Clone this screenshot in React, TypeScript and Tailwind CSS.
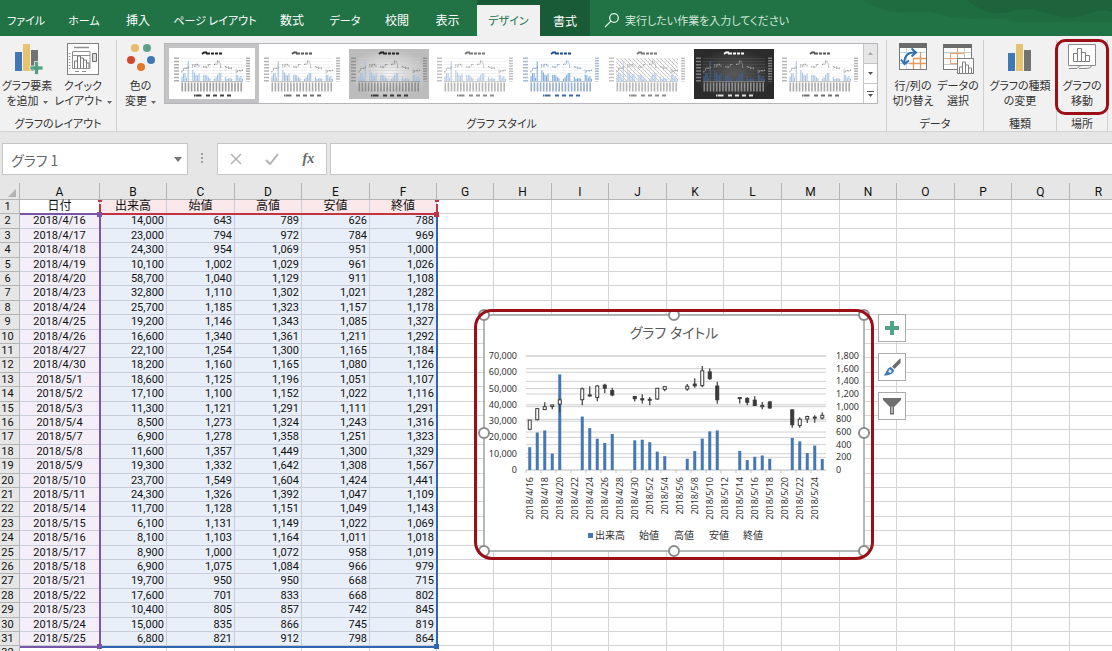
import React, { useState } from 'react'
import clsx from 'clsx'

type Price = [date: string, volume: number, open: number, high: number, low: number, close: number]

const prices: Price[] = [
    ["2018/4/16", 14000, 643, 789, 626, 788],
    ["2018/4/17", 23000, 794, 972, 784, 969],
    ["2018/4/18", 24300, 954, 1069, 951, 1000],
    ["2018/4/19", 10100, 1002, 1029, 961, 1026],
    ["2018/4/20", 58700, 1040, 1129, 911, 1108],
    ["2018/4/23", 32800, 1110, 1302, 1021, 1282],
    ["2018/4/24", 25700, 1185, 1323, 1157, 1178],
    ["2018/4/25", 19200, 1146, 1343, 1085, 1327],
    ["2018/4/26", 16600, 1340, 1361, 1211, 1292],
    ["2018/4/27", 22100, 1254, 1300, 1165, 1184],
    ["2018/4/30", 18200, 1160, 1165, 1080, 1126],
    ["2018/5/1", 18600, 1125, 1196, 1051, 1107],
    ["2018/5/2", 17100, 1100, 1152, 1022, 1116],
    ["2018/5/3", 11300, 1121, 1291, 1111, 1291],
    ["2018/5/4", 8500, 1273, 1324, 1243, 1316],
    ["2018/5/7", 6900, 1278, 1358, 1251, 1323],
    ["2018/5/8", 11600, 1357, 1449, 1300, 1329],
    ["2018/5/9", 19300, 1332, 1642, 1308, 1567],
    ["2018/5/10", 23700, 1549, 1604, 1424, 1441],
    ["2018/5/11", 24300, 1326, 1392, 1047, 1109],
    ["2018/5/14", 11700, 1128, 1151, 1049, 1143],
    ["2018/5/15", 6100, 1131, 1149, 1022, 1069],
    ["2018/5/16", 8100, 1103, 1164, 1011, 1018],
    ["2018/5/17", 8900, 1000, 1072, 958, 1019],
    ["2018/5/18", 6900, 1075, 1084, 966, 979],
    ["2018/5/21", 19700, 950, 950, 668, 715],
    ["2018/5/22", 17600, 701, 833, 668, 802],
    ["2018/5/23", 10400, 805, 857, 742, 845],
    ["2018/5/24", 15000, 835, 866, 745, 819],
    ["2018/5/25", 6800, 821, 912, 798, 864],
]

// days since 2018/4/16
const dayIndex = (date: string) => {
    const [, m, d] = date.split("/").map(Number)
    return m === 4 ? d - 16 : d + 14
}

const dateLabels = Array.from({ length: 20 }, (_, i) => {
    const n = i * 2 + 16
    return n <= 30 ? `2018/4/${n}` : `2018/5/${n - 30}`
})

const tabs = [
    { label: "ファイル", cls: "w-[52px] text-[11px]" },
    { label: "ホーム", cls: "w-[64px] text-[11px]" },
    { label: "挿入", cls: "w-[44px] text-xs" },
    { label: "ページ レイアウト", cls: "w-[110px] text-[11px]" },
    { label: "数式", cls: "w-[44px] text-xs" },
    { label: "データ", cls: "w-[62px] text-[11px]" },
    { label: "校閲", cls: "w-[42px] text-xs" },
    { label: "表示", cls: "w-[59px] text-xs" },
]

const columns = [
    { name: "A", w: "w-[80px]" },
    { name: "B", w: "w-[67px]" },
    { name: "C", w: "w-[68px]" },
    { name: "D", w: "w-[67px]" },
    { name: "E", w: "w-[68px]" },
    { name: "F", w: "w-[67px]" },
    { name: "G", w: "w-[57px]" },
    { name: "H", w: "w-[58px]" },
    { name: "I", w: "w-[57px]" },
    { name: "J", w: "w-[58px]" },
    { name: "K", w: "w-[57px]" },
    { name: "L", w: "w-[58px]" },
    { name: "M", w: "w-[58px]" },
    { name: "N", w: "w-[57px]" },
    { name: "O", w: "w-[58px]" },
    { name: "P", w: "w-[57px]" },
    { name: "Q", w: "w-[58px]" },
    { name: "R", w: "w-[58px]" },
]

const headings = ["日付", "出来高", "始値", "高値", "安値", "終値"]

/* ---------- ribbon icons ---------- */

const AddElementIcon = () => (
    <svg width="32" height="32" viewBox="0 0 32 32" aria-hidden="true">
        <rect x="4" y="9" width="7" height="19" fill="#3f78b5" />
        <rect x="12" y="1" width="7" height="27" fill="#e8c36f" />
        <rect x="20" y="7" width="7" height="21" fill="#737373" />
        <path d="M23.500 18.500h4v4.500h4.500v4h-4.500v4.500h-4v-4.500h-4.500v-4h4.500z" fill="#4f9f80" stroke="#f1f1f1" strokeWidth="0.800" />
    </svg>
)

const QuickLayoutIcon = () => (
    <svg width="32" height="32" viewBox="0 0 32 32" fill="none" stroke="#6b6b6b" aria-hidden="true">
        <rect x="0.500" y="0.500" width="31" height="31" fill="#fff" stroke="#808080" />
        <path d="M7 4.500h15" strokeWidth="1.500" stroke="#909090" />
        <path d="M5.500 8.500h17.500v17h-17.500zM5.500 12.500h17.500" stroke="#909090" />
        <path d="M7.500 25v-7h3v7M10.500 25v-12h3v12M13.500 25v-10h3v10M16.500 25v-8h3v8M19.500 25v-5h2.500v5" stroke="#777" />
        <path d="M25.500 10.500h4v8h-4z" fill="#ddd" />
        <path d="M2.500 10v16" strokeDasharray="1 2" strokeWidth="1.500" stroke="#909090" />
        <path d="M8 28.500h4M15 28.500h4" stroke="#909090" />
    </svg>
)

const ColorsIcon = () => (
    <svg width="32" height="32" viewBox="0 0 32 32" aria-hidden="true">
        <circle cx="10" cy="5" r="4" fill="#e8bd68" />
        <circle cx="22" cy="5" r="4" fill="#5da287" />
        <circle cx="6" cy="17" r="4" fill="#cf4a2c" />
        <circle cx="26" cy="17" r="4" fill="#3f78b5" />
        <circle cx="16" cy="24" r="4" fill="#e0782a" />
    </svg>
)

const SwitchRowColIcon = () => (
    <svg width="32" height="32" viewBox="0 0 32 32" fill="none" aria-hidden="true">
        <rect x="2.500" y="1.500" width="27" height="25" fill="#fff" stroke="#7a7a7a" />
        <rect x="2" y="0" width="28" height="5" fill="#6b6b6b" />
        <path d="M9.500 5v21M3 9.500h26M3 20.500h26" stroke="#c3d3e6" />
        <path d="M16.500 15v11M23.500 9v17M16 15.500h13M12 20.500h17" stroke="#e8975a" strokeWidth="1.300" />
        <path d="M7.500 20C7 13 11 9 18 9.500" stroke="#2f6fb0" strokeWidth="2" />
        <path d="M14.500 5.500l4.500 4-4.500 4M4 16.500l3.500 4.500 4.500-3.500" stroke="#2f6fb0" strokeWidth="2" />
    </svg>
)

const SelectDataIcon = () => (
    <svg width="32" height="32" viewBox="0 0 32 32" fill="none" aria-hidden="true">
        <rect x="1.500" y="1.500" width="28" height="25" fill="#fff" stroke="#7a7a7a" />
        <rect x="1" y="1" width="29" height="4" fill="#6b6b6b" />
        <path d="M2 9.500h27M2 21.500h27M22.500 5v10" stroke="#c9c9c9" />
        <path d="M8.500 9v12M15.500 5v16M8 10.500h14M2 15.500h20M8 20.500h8" stroke="#e8a273" />
        <rect x="15.500" y="15.500" width="16" height="15" fill="#fff" stroke="#808080" />
        <path d="M17.500 30v-6h3v6M20.500 30v-11h3v11M23.500 30v-8h3v8M26.500 30v-5h3v5" stroke="#808080" />
    </svg>
)

const ChartTypeIcon = () => (
    <svg width="32" height="32" viewBox="0 0 32 32" aria-hidden="true">
        <rect x="4" y="10" width="7" height="18" fill="#3f78b5" />
        <rect x="12" y="1" width="7" height="27" fill="#e8c36f" />
        <rect x="20" y="7" width="7" height="21" fill="#737373" />
    </svg>
)

const MoveChartIcon = () => (
    <svg width="32" height="32" viewBox="0 0 32 32" fill="none" stroke="#808080" aria-hidden="true">
        <path d="M2.500 1.500h27v21h-27z" fill="#fff" stroke="#8c8c8c" />
        <path d="M7.500 18.500v-8h4v8zM11.500 18.500v-13h4v13zM15.500 18.500v-9h4v9zM19.500 18.500v-6h4v6z" />
        <path d="M3 25.500h8c1-2 3-3 6-3M13 25.500h6c4 0 6-1 7-3" stroke="#8c8c8c" />
    </svg>
)

/* ---------- style gallery ---------- */

type ThumbStyle = { bg: string; bar: string; ink: string; title: string; grid: string; hatch?: boolean }

const thumbStyles: ThumbStyle[] = [
    { bg: "#ffffff", bar: "#9cc0e6", ink: "#777777", title: "#222222", grid: "#e2e2e2" },
    { bg: "#ffffff", bar: "#9dbbdd", ink: "#888888", title: "#555555", grid: "#e8e8e8" },
    { bg: "url(#thumbGray)", bar: "#a3bfdd", ink: "#777777", title: "#222222", grid: "#cccccc" },
    { bg: "#ffffff", bar: "#b3c7e2", ink: "#999999", title: "#777777", grid: "#e8e8e8" },
    { bg: "#ffffff", bar: "#7ba5d8", ink: "#6f8cb2", title: "#1f4e8c", grid: "#e4ebf4" },
    { bg: "#ffffff", bar: "#b4cceb", ink: "#999999", title: "#777777", grid: "#e4e4e4", hatch: true },
    { bg: "url(#thumbDark)", bar: "#40618c", ink: "#b4b4b4", title: "#ffffff", grid: "#555555" },
    { bg: "#ffffff", bar: "#a5c0e2", ink: "#888888", title: "#555555", grid: "#f0f0f0" },
]

const StyleThumb = ({ s }: { s: ThumbStyle }) => {
    const x = (date: string) => 9.5 + dayIndex(date) * 1.55
    return (
        <svg width="80" height="50" viewBox="0 0 80 50" className="shrink-0" aria-hidden="true">
            <defs>
                <radialGradient id="thumbGray">
                    <stop offset="0" stopColor="#f4f4f4" />
                    <stop offset="1" stopColor="#bcbcbc" />
                </radialGradient>
                <radialGradient id="thumbDark">
                    <stop offset="0" stopColor="#5a5a5a" />
                    <stop offset="1" stopColor="#2b2b2b" />
                </radialGradient>
                <pattern id="thumbHatch" width="4" height="4" patternUnits="userSpaceOnUse">
                    <path d="M0 0l4 4" stroke="#a8a8a8" strokeWidth="0.700" />
                </pattern>
            </defs>
            <rect width="80" height="50" fill={s.bg} />
            {s.hatch && <rect x="9" y="9" width="62" height="23" fill="url(#thumbHatch)" />}
            <path d="M30 5l2-1.500h3M34 4.500h4M39 4.500h3M43 4.500h3M47 4.500h3" stroke={s.title} strokeWidth="1.800" fill="none" />
            {[9, 12, 15, 18, 21, 24, 27, 30].map((y) => (
                <path key={y} d={`M9 ${y + 0.5}h62`} stroke={s.grid} strokeWidth="0.500" />
            ))}
            <path d="M4.500 8.500v24" stroke={s.ink} strokeWidth="5" strokeDasharray="1.500 1.700" opacity="0.600" />
            <path d="M76 8.500v24" stroke={s.ink} strokeWidth="4" strokeDasharray="1.500 1.100" opacity="0.600" />
            {prices.map(([date, volume, , high, low, close]) => (
                <g key={date}>
                    <rect x={x(date)} y={32 - volume / 3000} width="1" height={volume / 3000} fill={s.bar} />
                    <rect x={x(date)} y={32 - high / 78} width="0.700" height={Math.max(0.8, (high - low) / 78)} fill={s.ink} opacity="0.600" />
                    <rect x={x(date)} y={32 - close / 78} width="1" height="0.700" fill={s.ink} />
                </g>
            ))}
            <path d="M9 32.500h62" stroke={s.ink} strokeWidth="0.500" />
            <path d="M9.500 38h62" stroke={s.ink} strokeWidth="9" strokeDasharray="1.600 1.500" opacity="0.700" />
            <path d="M22 46.500h1M23.500 46.500h6M34 46.500h4M41 46.500h4M48 46.500h4M55 46.500h4" stroke={s.title} strokeWidth="1.800" opacity="0.850" />
        </svg>
    )
}

/* ---------- chart ---------- */

const handles = [[8, 6], [198, 6], [388, 6], [8, 124], [388, 124], [8, 242], [198, 242], [388, 242]]

const StockChart = () => {
    const left = 50
    const top = 47
    const bottom = 161
    const step = 7.5
    const yVolume = (v: number) => bottom - (v / 70000) * (bottom - top)
    const yPrice = (v: number) => bottom - (v / 1800) * (bottom - top)

    return (
        <svg width="396" height="248" viewBox="0 0 396 248" className="block font-['Noto_Sans','Noto_Sans_CJK_JP',sans-serif] [font-feature-settings:'palt']">
            <rect x="8" y="6" width="380" height="236" fill="#fff" stroke="#9ba3a0" strokeWidth="1.500" />
            <text x="198" y="29" fontSize="14" fill="#595959" textAnchor="middle">グラフ タイトル</text>

            {[0, 1, 2, 3, 4, 5, 6, 7].map((n) => (
                <g key={n}>
                    <path d={`M${left} ${yVolume(n * 10000)}h300`} stroke="#d0d0d0" />
                    <text x="41" y={yVolume(n * 10000) + 3} fontSize="9" fill="#333" textAnchor="end">{(n * 10000).toLocaleString("en-US")}</text>
                </g>
            ))}
            {[0, 1, 2, 3, 4, 5, 6, 7, 8, 9].map((n) => (
                <g key={n}>
                    <path d={`M${left} ${yPrice(n * 200)}h300`} stroke="#d0d0d0" />
                    <text x="360" y={yPrice(n * 200) + 3} fontSize="9" fill="#333">{(n * 200).toLocaleString("en-US")}</text>
                </g>
            ))}
            {dateLabels.map((label, i) => {
                const cx = left + (i * 2 + 0.5) * step
                return (
                    <g key={label}>
                        <path d={`M${cx - 3.75} ${bottom}v3`} stroke="#c0c0c0" />
                        <text transform={`translate(${cx + 3} 168) rotate(-90)`} fontSize="9" fill="#333" textAnchor="end">{label}</text>
                    </g>
                )
            })}

            {prices.map(([date, volume, open, high, low, close]) => {
                const cx = left + (dayIndex(date) + 0.5) * step
                const up = close >= open
                return (
                    <g key={date}>
                        <rect x={cx - 1.5} y={yVolume(volume)} width="3" height={bottom - yVolume(volume)} fill="#4477b3" />
                        <path d={`M${cx} ${yPrice(high)}V${yPrice(low)}`} stroke="#3a3a3a" strokeWidth="1.200" />
                        <rect
                            x={cx - 1.5}
                            y={yPrice(Math.max(open, close))}
                            width="3"
                            height={Math.max(1, Math.abs(yPrice(open) - yPrice(close)))}
                            fill={up ? "#fff" : "#3a3a3a"}
                            stroke="#3a3a3a"
                        />
                    </g>
                )
            })}

            <rect x="112" y="224" width="5" height="5" fill="#4477b3" />
            <g fontSize="10" fill="#333">
                <text x="119" y="230">出来高</text>
                <text x="163" y="230">始値</text>
                <text x="198" y="230">高値</text>
                <text x="233" y="230">安値</text>
                <text x="267" y="230">終値</text>
            </g>
            {handles.map(([x, y]) => (
                <circle key={`${x}-${y}`} cx={x} cy={y} r="5" fill="#fff" stroke="#8c8c8c" strokeWidth="2" />
            ))}
        </svg>
    )
}

/* ---------- ribbon parts ---------- */

const Caret = () => (
    <svg width="5" height="3" viewBox="0 0 5 3" className="ml-1 inline-block align-middle" aria-hidden="true">
        <path d="M0 0h5l-2.500 3z" fill="#666" />
    </svg>
)

type RibbonButtonProps = { icon: React.ReactNode; line1: string; line2: string; width: string; caret?: boolean }

const RibbonButton = ({ icon, line1, line2, width, caret }: RibbonButtonProps) => (
    <button type="button" className={clsx("flex shrink-0 flex-col items-center self-start whitespace-nowrap leading-[15px]", width)}>
        {icon}
        <span className="mt-[3px]">{line1}</span>
        <span>{line2}{caret && <Caret />}</span>
    </button>
)

type RibbonGroupProps = { label: string; className: string; children: React.ReactNode }

const RibbonGroup = ({ label, className, children }: RibbonGroupProps) => (
    <section aria-label={label} className={clsx("mt-1 flex flex-col border-r border-[#cfcfcf]", className)}>
        <div className="flex flex-1 items-start pt-[3px]">{children}</div>
        <div className="h-4 text-center leading-4">{label}</div>
    </section>
)

const App = () => {
    const [styleNo, setStyleNo] = useState(0)
    const [search, setSearch] = useState("")
    const [name, setName] = useState("グラフ 1")
    const [formula, setFormula] = useState("")

    return (
        <div className="flex h-screen flex-col overflow-hidden bg-[#e6e6e6] font-['Noto_Sans_CJK_JP',sans-serif] text-[11px] text-[#333] [font-feature-settings:'palt']">
            <header className="relative flex h-9 shrink-0 bg-[#217346] text-white">
                <svg className="absolute top-0 right-0" width="250" height="24" viewBox="0 0 250 24" aria-hidden="true">
                    <path d="M0 0h250v22h-95c-20-6-45-2-62-4s-20-8-42-6S18 10 0 0z" fill="#1f6c41" />
                    <path d="M105 0h145v12c-18-6-26 8-48 5s-30-12-52-6-32-2-45-11z" fill="#1d643c" />
                </svg>
                <nav className="relative flex">
                    {tabs.map((tab) => (
                        <button key={tab.label} type="button" className={clsx("pt-1 whitespace-nowrap", tab.cls)}>{tab.label}</button>
                    ))}
                    <div className="flex bg-[#1a5b37] pt-[5px]">
                        <button type="button" className="w-[63px] bg-[#f1f1f1] text-[#217346]">デザイン</button>
                        <button type="button" className="w-[50px] text-xs">書式</button>
                    </div>
                </nav>
                <label className="relative flex flex-1 items-center gap-1 pt-1 pl-[14px]">
                    <svg width="17" height="17" viewBox="0 0 17 17" fill="none" stroke="#e3f1e8" strokeWidth="1.300" aria-hidden="true">
                        <circle cx="10" cy="6" r="4.300" />
                        <path d="M6.800 9.300L1 15" />
                    </svg>
                    <input
                        value={search}
                        onChange={(e) => setSearch(e.target.value)}
                        placeholder="実行したい作業を入力してください"
                        aria-label="操作アシスト"
                        className="w-[200px] bg-transparent outline-none placeholder:text-[#d5e8dc]"
                    />
                </label>
            </header>

            <div className="flex h-24 shrink-0 border-b border-[#d2d2d2] bg-[#f1f1f1]">
                <RibbonGroup label="グラフのレイアウト" className="w-[117px]">
                    <RibbonButton icon={<AddElementIcon />} line1="グラフ要素" line2="を追加" width="w-[54px]" caret />
                    <RibbonButton icon={<QuickLayoutIcon />} line1="クイック" line2="レイアウト" width="w-[58px]" caret />
                </RibbonGroup>
                <RibbonGroup label="グラフ スタイル" className="min-w-0 flex-1">
                    <RibbonButton icon={<ColorsIcon />} line1="色の" line2="変更" width="w-[47px]" caret />
                    <div className="mr-2 flex h-[61px] min-w-0 flex-1 border border-[#b9b4bb] bg-white">
                        {thumbStyles.map((s, i) => (
                            <button
                                key={i}
                                type="button"
                                aria-label={`スタイル ${i + 1}`}
                                onClick={() => setStyleNo(i)}
                                className={clsx("flex min-w-0 flex-1 items-center justify-center", i === styleNo && "border-4 border-[#c3c3c3]")}
                            >
                                <StyleThumb s={s} />
                            </button>
                        ))}
                        <div className="flex w-[14px] flex-col divide-y divide-[#c6c6c6] border-l border-[#c6c6c6]">
                            <button type="button" aria-label="前の行" className="flex flex-1 items-center justify-center bg-[#e6e6e6]">
                                <svg width="5" height="3" aria-hidden="true"><path d="M0 3h5l-2.500-3z" fill="#aaa" /></svg>
                            </button>
                            <button type="button" aria-label="次の行" className="flex flex-1 items-center justify-center">
                                <svg width="5" height="3" aria-hidden="true"><path d="M0 0h5l-2.500 3z" fill="#555" /></svg>
                            </button>
                            <button type="button" aria-label="その他" className="flex flex-1 items-center justify-center">
                                <svg width="7" height="6" aria-hidden="true"><path d="M0 0h7v1h-7zM1 3h5l-2.500 3z" fill="#555" /></svg>
                            </button>
                        </div>
                    </div>
                </RibbonGroup>
                <RibbonGroup label="データ" className="w-[97px]">
                    <RibbonButton icon={<SwitchRowColIcon />} line1="行/列の" line2="切り替え" width="w-[52px]" />
                    <RibbonButton icon={<SelectDataIcon />} line1="データの" line2="選択" width="w-[38px]" />
                </RibbonGroup>
                <RibbonGroup label="種類" className="w-[73px]">
                    <RibbonButton icon={<ChartTypeIcon />} line1="グラフの種類" line2="の変更" width="w-full" />
                </RibbonGroup>
                <RibbonGroup label="場所" className="relative mr-1 w-[51px]">
                    <RibbonButton icon={<MoveChartIcon />} line1="グラフの" line2="移動" width="w-full" />
                    <div className="pointer-events-none absolute -inset-x-[2px] -top-[1px] h-[76px] rounded-[10px] border-3 border-[#9b1016]" />
                </RibbonGroup>
            </div>

            <div className="flex h-[51px] shrink-0 pt-[11px] pb-2">
                <div className="ml-[2px] flex w-[186px] items-center border border-[#c6c6c6] bg-white">
                    <input value={name} onChange={(e) => setName(e.target.value)} aria-label="名前ボックス" className="min-w-0 flex-1 pt-[2px] pl-2 text-sm text-[#666] outline-none" />
                    <button type="button" aria-label="名前の一覧" className="px-[5px]">
                        <svg width="8" height="5" aria-hidden="true"><path d="M0 0h8l-4 5z" fill="#777" /></svg>
                    </button>
                </div>
                <svg width="29" height="30" viewBox="0 0 29 30" fill="#a0a0a0" aria-hidden="true">
                    <path d="M13 10h2v2h-2zM13 14h2v2h-2zM13 18h2v2h-2z" />
                </svg>
                <div className="flex w-[110px] items-center justify-around border border-[#c6c6c6] bg-white">
                    <button type="button" aria-label="キャンセル">
                        <svg width="12" height="12" viewBox="0 0 12 12" stroke="#b4b4b4" strokeWidth="1.600" aria-hidden="true"><path d="M1 1l10 10M11 1L1 11" /></svg>
                    </button>
                    <button type="button" aria-label="入力">
                        <svg width="14" height="12" viewBox="0 0 14 12" fill="none" stroke="#b4b4b4" strokeWidth="2" aria-hidden="true"><path d="M1 7l4 4 8-10" /></svg>
                    </button>
                    <button type="button" className="font-['Liberation_Serif',serif] text-sm leading-4 font-bold text-[#666] italic">fx</button>
                </div>
                <input value={formula} onChange={(e) => setFormula(e.target.value)} aria-label="数式バー" className="ml-[3px] min-w-0 flex-1 border border-r-0 border-[#c6c6c6] bg-white px-2 text-sm outline-none" />
            </div>

            <main className="relative min-h-0 flex-1 overflow-hidden bg-white">
                <table className="w-px min-w-full table-fixed border-separate border-spacing-0 font-[Roboto,'Noto_Sans_CJK_JP',sans-serif] text-[11px] text-[#111]">
                    <colgroup>
                        <col className="w-[20px]" />
                        {columns.map((c) => <col key={c.name} className={c.w} />)}
                    </colgroup>
                    <thead>
                        <tr className="h-[17px] bg-[#e6e6e6] leading-[16px]">
                            <th className="border-r border-b border-[#b4b4b4] p-0" aria-label="すべて選択">
                                <svg width="8" height="8" className="mt-1 ml-auto mr-[3px]" aria-hidden="true"><path d="M8 0v8H0z" fill="#b4b4b4" /></svg>
                            </th>
                            {columns.map((c) => (
                                <th key={c.name} scope="col" className="border-r border-b border-[#b4b4b4] p-0 pt-[2px] text-xs leading-[14px] font-normal">{c.name}</th>
                            ))}
                        </tr>
                    </thead>
                    <tbody>
                        {Array.from({ length: 32 }, (_, row) => {
                            const record = row > 0 ? prices[row - 1] : undefined
                            return (
                                <tr key={row} className={row % 5 === 1 || row % 5 === 3 ? "h-[15px] leading-[14px]" : "h-[14px] leading-[13px]"}>
                                    <th scope="row" className="border-r border-b border-[#b4b4b4] bg-[#e6e6e6] p-0 pr-1 font-normal">{row + 1}</th>
                                    {columns.map((c, i) => {
                                        const filled = i < 6 && row < 31
                                        return (
                                            <td
                                                key={c.name}
                                                className={clsx(
                                                    "border-r border-b p-0",
                                                    filled && (row > 0 || i > 0) ? "border-[#c8cdd9]" : "border-[#d4d4d4]",
                                                    filled && row === 0 && "text-center text-xs leading-[13px]",
                                                    filled && row === 0 && i > 0 && "bg-[#fbe8ea]",
                                                    filled && row > 0 && i === 0 && "bg-[#f3eef8] text-center",
                                                    filled && row > 0 && i > 0 && "bg-[#e8eff9] pr-[2px] text-right",
                                                )}
                                            >
                                                {filled && (row === 0 ? headings[i] : record?.[i].toLocaleString("en-US"))}
                                            </td>
                                        )
                                    })}
                                </tr>
                            )
                        })}
                    </tbody>
                </table>

                {/* ranges used by the selected chart */}
                <div className="pointer-events-none absolute top-[17px] left-[99px] h-[15px] w-[339px] border-b-2 border-[#c23344]">
                    <i className="absolute top-1 left-0 h-2 w-[2px] bg-[#c23344]" />
                    <i className="absolute top-0 -left-px h-[2px] w-1 bg-[#c23344]" />
                    <i className="absolute top-1 right-0 h-2 w-[2px] bg-[#c23344]" />
                    <i className="absolute top-0 -right-px h-[2px] w-1 bg-[#c23344]" />
                </div>
                <div className="pointer-events-none absolute top-[31px] left-[100px] h-[434px] w-[338px] border-r-2 border-b-2 border-[#2f66b0]">
                    <i className="absolute -right-[3px] -bottom-[3px] size-[5px] bg-[#2f66b0]" />
                    <i className="absolute -top-[2px] -right-[3px] size-[5px] bg-[#c23344]" />
                </div>
                <div className="pointer-events-none absolute top-[30px] left-[20px] h-[435px] w-[81px] border-y-2 border-r-2 border-[#7a56a8]">
                    <i className="absolute -top-[3px] -right-[3px] size-[5px] bg-[#7a56a8]" />
                    <i className="absolute -right-[3px] -bottom-[3px] size-[5px] bg-[#7a56a8]" />
                </div>

                <div className="absolute top-[126px] left-[474px] flex items-start gap-1">
                    <div className="relative px-[2px]">
                        <StockChart />
                        <div className="pointer-events-none absolute inset-x-0 top-0 h-[251px] rounded-[18px] border-3 border-[#9b1016]" />
                    </div>
                    <div className="mt-[5px] flex flex-col gap-[11px]">
                        <button type="button" aria-label="グラフ要素" className="flex size-7 items-center justify-center border border-[#ababab] bg-white">
                            <svg width="14" height="14" aria-hidden="true"><path d="M5 0h4v5h5v4H9v5H5V9H0V5h5z" fill="#4fa283" /></svg>
                        </button>
                        <button type="button" aria-label="グラフ スタイル" className="flex size-7 items-center justify-center border border-[#ababab] bg-white">
                            <svg width="20" height="20" viewBox="0 0 20 20" aria-hidden="true">
                                <path d="M18.500 1v5l-6 6-2.500-2.500z" fill="#6b6b6b" />
                                <path d="M9 10l3 3c0 4-5 5.500-10.500 5.500 3-2 3-8 7.500-8.500z" fill="#3f78b5" />
                                <path d="M7.500 12l2.500 2-1.500 2-2.500-1z" fill="#d7e5f3" />
                            </svg>
                        </button>
                        <button type="button" aria-label="グラフ フィルター" className="flex size-7 items-center justify-center border border-[#ababab] bg-white">
                            <svg width="20" height="18" viewBox="0 0 20 18" aria-hidden="true">
                                <path d="M1 1h18v2l-7 7v7.500H8V10L1 3z" fill="#6f6f6f" />
                                <path d="M10 9.500v6.500" stroke="#ddd" strokeWidth="1.200" />
                            </svg>
                        </button>
                    </div>
                </div>
            </main>
        </div>
    )
}

export default App
